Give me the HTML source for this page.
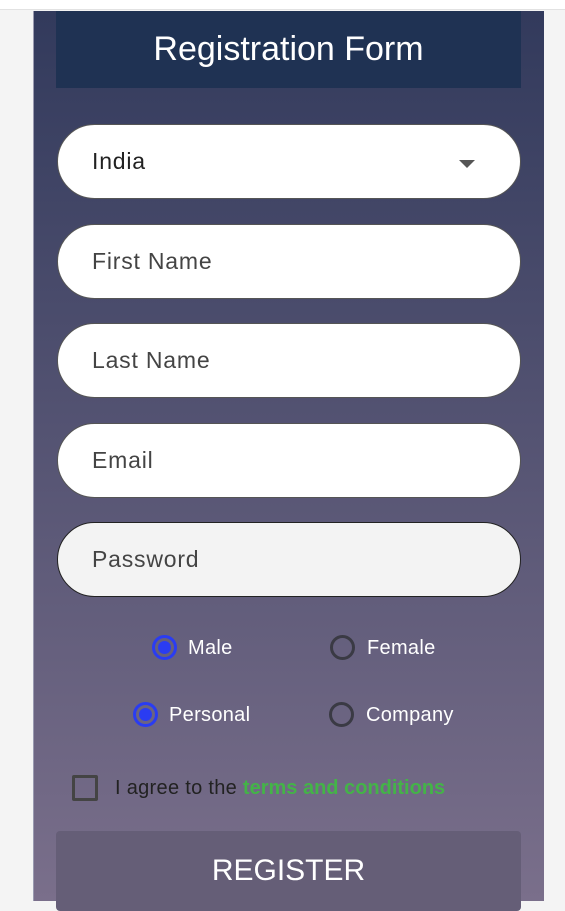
<!DOCTYPE html>
<html><head><style>
*{box-sizing:border-box;margin:0;padding:0}
body{width:565px;height:901px;background:#f4f4f4;font-family:"Liberation Sans",Roboto,sans-serif;position:relative;overflow:hidden}
.top{position:absolute;left:0;top:0;width:565px;height:10px;background:#fff;border-bottom:1px solid #e2e2e2}
.panel{position:absolute;left:33px;top:11px;width:511px;height:890px;background:linear-gradient(#323a5c,#7a6f8b);border-left:1px solid #9a9ab0}
.hdr{position:absolute;left:56px;top:11px;width:465px;height:77px;background:#1f3253;color:#fff;font-size:34px;text-align:center;line-height:76px}
.in{position:absolute;left:57px;width:464px;height:75px;border-radius:38px;background:#fff;border:1px solid #555;font-size:23px;color:#444;padding-left:34px;line-height:73px;letter-spacing:.8px}
.r{position:absolute;width:25px;height:25px;border-radius:50%;border:3px solid #3a3a44}
.r.on{border-color:#2a3cf2}
.r.on::after{content:"";position:absolute;left:3px;top:3px;width:13px;height:13px;border-radius:50%;background:#2a3cf2}
.lb{position:absolute;color:#fff;font-size:20px;letter-spacing:.3px}
</style></head><body>
<div class="top"></div>
<div class="panel"></div>
<div class="hdr">Registration Form</div>
<div class="in" style="top:124px;color:#222">India<span style="position:absolute;right:45px;top:35px;border-left:8px solid transparent;border-right:8px solid transparent;border-top:8px solid #555"></span></div>
<div class="in" style="top:224px">First Name</div>
<div class="in" style="top:323px">Last Name</div>
<div class="in" style="top:423px">Email</div>
<div class="in" style="top:522px;background:#f3f3f3;border-color:#222">Password</div>
<div class="r on" style="left:152px;top:635px"></div><div class="lb" style="left:188px;top:637px">Male</div>
<div class="r" style="left:330px;top:635px"></div><div class="lb" style="left:367px;top:637px">Female</div>
<div class="r on" style="left:133px;top:702px"></div><div class="lb" style="left:169px;top:704px">Personal</div>
<div class="r" style="left:329px;top:702px"></div><div class="lb" style="left:366px;top:704px">Company</div>
<div style="position:absolute;left:72px;top:775px;width:26px;height:26px;border:3px solid #444;border-radius:2px"></div>
<div class="lb" style="left:115px;top:777px;color:#222">I agree to the <span style="color:#44b348;font-weight:bold;letter-spacing:0">terms and conditions</span></div>
<div style="position:absolute;left:56px;top:831px;width:465px;height:80px;background:#655e77;border-radius:4px;color:#fff;font-size:30px;text-align:center;line-height:80px">REGISTER</div>
</body></html>
